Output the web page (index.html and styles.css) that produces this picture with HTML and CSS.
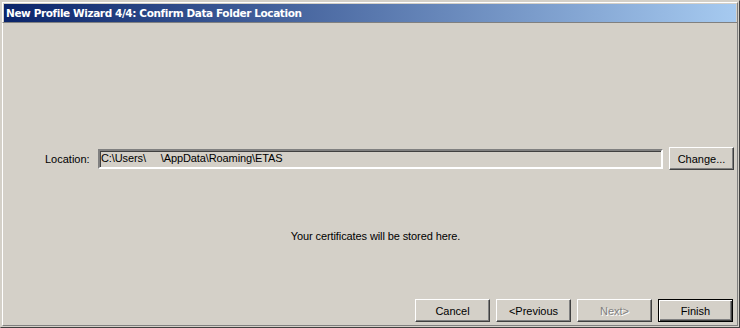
FILE: index.html
```html
<!DOCTYPE html>
<html>
<head>
<meta charset="utf-8">
<link rel="stylesheet" href="styles.css">
</head>
<body>
<div class="window">
  <div class="titlebar"><span class="title">New Profile Wizard 4/4: Confirm Data Folder Location</span></div>
  <div class="content">
    <div class="loc-row">
      <span class="label">Location:</span>
      <div class="field">C:\Users\&nbsp;&nbsp;&nbsp;&nbsp;&nbsp;\AppData\Roaming\ETAS</div>
      <button class="btn change">Change...</button>
    </div>
    <div class="note">Your certificates will be stored here.</div>
    <div class="buttons">
      <button class="btn">Cancel</button>
      <button class="btn">&lt;Previous</button>
      <button class="btn disabled">Next&gt;</button>
      <button class="btn default">Finish</button>
    </div>
  </div>
</div>
</body>
</html>
```
FILE: styles.css
```css
html, body {
  margin: 0;
  padding: 0;
  background: #d4d0c8;
}
.window {
  width: 740px;
  height: 328px;
  box-sizing: border-box;
  border-style: solid;
  border-width: 1px;
  border-color: #d4d0c8 #404040 #404040 #d4d0c8;
  display: flex;
  flex-direction: column;
  font-family: "Liberation Sans", Arial, sans-serif;
  font-size: 11px;
  color: #000;
}
.titlebar {
  margin: 1px;
  border-style: solid;
  border-width: 1px;
  border-color: #ffffff #808080 #808080 #ffffff;
  padding: 1px 1px 0 1px;
  flex: 0 0 auto;
}
.title {
  display: block;
  height: 18px;
  line-height: 18px;
  padding-left: 2px;
  background: linear-gradient(to right, #0a246a, #a6caf0);
  color: #ffffff;
  font-family: "DejaVu Sans", Verdana, sans-serif;
  font-weight: bold;
  font-size: 10.5px;
  letter-spacing: -0.4px;
  white-space: nowrap;
}
.content {
  flex: 1 1 auto;
  display: flex;
  flex-direction: column;
  margin: -1px 1px 1px 1px;
  border-style: solid;
  border-width: 0 1px 1px 1px;
  border-color: #ffffff #808080 #808080 #ffffff;
  padding: 0 3px 3px 2px;
}
.loc-row {
  margin-top: 124px;
  display: flex;
  align-items: center;
  height: 23px;
}
.label {
  width: 43px;
  margin-left: 40px;
  margin-right: 10px;
  text-align: right;
  padding-top: 1px;
}
.field {
  flex: 1 1 auto;
  height: 16px;
  line-height: 15px;
  border-style: solid;
  border-width: 2px;
  border-color: #808080 #ffffff #ffffff #808080;
  box-shadow: inset 1px 1px 0 #404040, inset -1px -1px 0 #d4d0c8;
  padding: 0 2px 0 1px;
  background: #d4d0c8;
  white-space: pre;
  overflow: hidden;
  letter-spacing: -0.1px;
}
.btn {
  font-family: "Liberation Sans", Arial, sans-serif;
  font-size: 11px;
  color: #000;
  background: #d4d0c8;
  box-sizing: border-box;
  width: 75px;
  height: 23px;
  padding: 0;
  margin: 0;
  border-style: solid;
  border-width: 1px;
  border-color: #ffffff #404040 #404040 #ffffff;
  box-shadow: inset -1px -1px 0 #808080;
}
.change {
  width: 65px;
  margin-left: 6px;
}
.note {
  margin-top: 59px;
  text-align: center;
  padding-left: 12px;
  height: 14px;
  line-height: 14px;
  letter-spacing: -0.1px;
}
.buttons {
  margin-top: auto;
  display: flex;
  justify-content: flex-end;
  gap: 6px;
  padding-right: 1px;
}
.btn.disabled {
  color: #808080;
  text-shadow: 1px 1px 0 #ffffff;
}
.btn.default {
  border: 1px solid #000;
  box-shadow: inset 1px 1px 0 #ffffff, inset -1px -1px 0 #404040, inset -2px -2px 0 #808080;
}
```
